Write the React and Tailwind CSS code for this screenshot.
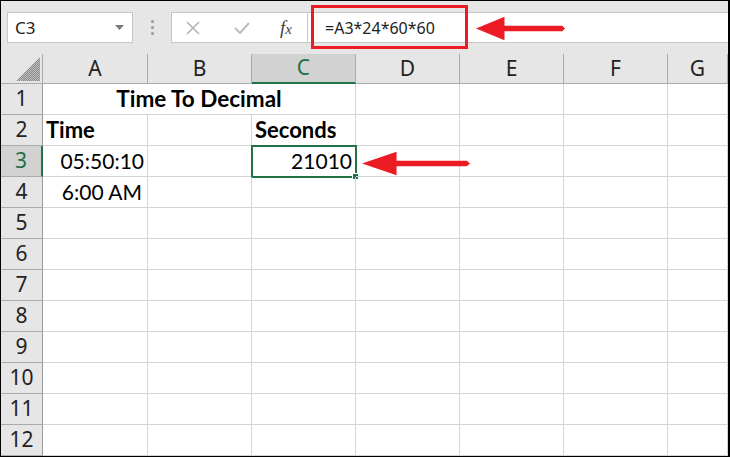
import React from 'react';

const cols = ['A', 'B', 'C', 'D', 'E', 'F', 'G'];
const rows = [1, 2, 3, 4, 5, 6, 7, 8, 9, 10, 11, 12];

const cellFont = { fontFamily: 'Lato, "Liberation Sans", sans-serif' };
const uiFont = { fontFamily: '"Noto Sans", "Open Sans", sans-serif' };

const data = {
  'A2': { text: 'Time', bold: true, align: 'left' },
  'C2': { text: 'Seconds', bold: true, align: 'left' },
  'A3': { text: '05:50:10', align: 'right' },
  'C3': { text: '21010', align: 'right' },
  'A4': { text: '6:00 AM', align: 'right', pr: true },
};

const Arrow = ({ className }) => (
  <svg className={className} viewBox="0 0 100 30" preserveAspectRatio="none">
    <polygon points="0,15 32,2 32,12 97,12 100,15 97,18 32,18 32,28" fill="#ed1c24" />
  </svg>
);

const App = () => {
  return (
    <div className="relative w-[730px] h-[457px] overflow-hidden bg-white border-l border-t border-b border-black border-r-2" style={uiFont}>
      {/* toolbar */}
      <div className="h-[53px] bg-[#e6e6e6] flex items-start pt-[11px] pl-[6px]">
        <div className="w-[126px] h-[31px] bg-white border border-[#c6c6c6] flex items-center justify-between pl-[7px] pr-[8px]">
          <span className="text-[17px] text-[#222]">C3</span>
          <svg width="9" height="6" viewBox="0 0 9 6"><polygon points="0,0 9,0 4.5,5" fill="#7a7a7a" /></svg>
        </div>
        <div className="w-[38px] h-[31px] flex flex-col items-center justify-center gap-[3px]">
          <span className="w-[3px] h-[3px] rounded-full bg-[#9a9a9a]" />
          <span className="w-[3px] h-[3px] rounded-full bg-[#9a9a9a]" />
          <span className="w-[3px] h-[3px] rounded-full bg-[#9a9a9a]" />
        </div>
        <div className="w-[137px] h-[31px] bg-white border border-[#c6c6c6] flex items-center">
          <svg className="ml-[14px]" width="14" height="14" viewBox="0 0 14 14">
            <path d="M1 1 L13 13 M13 1 L1 13" stroke="#b4b4b4" strokeWidth="1.6" />
          </svg>
          <svg className="ml-[34px]" width="16" height="12" viewBox="0 0 16 12">
            <path d="M1 6 L6 11 L15 1" stroke="#bcbcbc" strokeWidth="2" fill="none" />
          </svg>
          <span className="ml-[30px] text-[19px] italic text-[#444] leading-none" style={{ fontFamily: '"Liberation Serif", serif' }}>
            f<span className="text-[15px]">x</span>
          </span>
        </div>
        <div className="flex-1 h-[31px] bg-white border-y border-[#c6c6c6] flex items-center pl-[17px]">
          <span className="text-[16px] text-[#222]">=A3*24*60*60</span>
        </div>
      </div>

      {/* sheet */}
      <div className="grid grid-cols-[42px_105px_104px_104px_104px_104px_104px_1fr] grid-rows-[30px_repeat(12,31px)]">
        <div className="relative bg-[#e6e6e6] border-r border-b border-[#ababab]">
          <svg className="absolute right-[2px] bottom-[2px]" width="24" height="24" viewBox="0 0 24 24">
            <defs>
              <pattern id="dith" width="2" height="2" patternUnits="userSpaceOnUse">
                <rect width="2" height="2" fill="#bdbdbd" />
                <rect width="1" height="1" fill="#8c8c8c" />
                <rect x="1" y="1" width="1" height="1" fill="#8c8c8c" />
              </pattern>
            </defs>
            <polygon points="24,0 24,24 0,24" fill="url(#dith)" />
          </svg>
        </div>
        {cols.map((c) => (
          <div
            key={c}
            className={`flex items-center justify-center text-[21px] border-r ${c === 'C' ? 'bg-[#d2d2d2] text-[#217346] border-b-2 border-b-[#217346] border-r-[#ababab]' : 'bg-[#e6e6e6] text-[#222] border-b border-[#ababab]'}`}
          >
            {c}
          </div>
        ))}

        {rows.map((r) => (
          <React.Fragment key={r}>
            <div
              className={`flex items-center justify-center text-[21px] border-b border-b-[#ababab] ${r === 3 ? 'bg-[#d2d2d2] text-[#217346] border-r-2 border-r-[#217346]' : 'bg-[#e6e6e6] text-[#222] border-r border-r-[#9b9b9b]'}`}
            >
              {r}
            </div>
            {r === 1 ? (
              <>
                <div className="col-span-3 flex items-end justify-center pb-[1px] border-r border-b border-[#d4d4d4] text-[22.5px] leading-[28px] font-bold text-black" style={cellFont}>
                  Time To Decimal
                </div>
                {cols.slice(3).map((c) => (
                  <div key={c} className="border-r border-b border-[#d4d4d4]" />
                ))}
              </>
            ) : (
              cols.map((c) => {
                const d = data[c + r];
                const active = c === 'C' && r === 3;
                return (
                  <div
                    key={c}
                    className={`relative flex items-end pb-[1px] leading-[28px] text-black border-r border-b border-[#d4d4d4] ${d && d.bold ? 'text-[22px]' : 'text-[21px]'} ${d && d.align === 'right' ? 'justify-end' : 'justify-start'} ${d && d.pr ? 'pr-[5px]' : 'pr-[3px]'} pl-[3px] ${active ? 'outline-2 outline-[#217346] -outline-offset-1' : ''}`}
                    style={cellFont}
                  >
                    {d && <span className={d.bold ? 'font-bold' : ''}>{d.text}</span>}
                    {active && <span className="absolute -right-[4px] -bottom-[4px] w-[7px] h-[7px] bg-[#217346] border border-white" />}
                  </div>
                );
              })
            )}
          </React.Fragment>
        ))}
      </div>

      {/* annotations */}
      <div className="absolute left-[310px] top-[4px] w-[157px] h-[44px] border-[3px] border-[#ed1c24]" />
      <Arrow className="absolute left-[475px] top-[14px] w-[89px] h-[27px]" />
      <Arrow className="absolute left-[361px] top-[149px] w-[108px] h-[27px]" />
    </div>
  );
};

export default App;
